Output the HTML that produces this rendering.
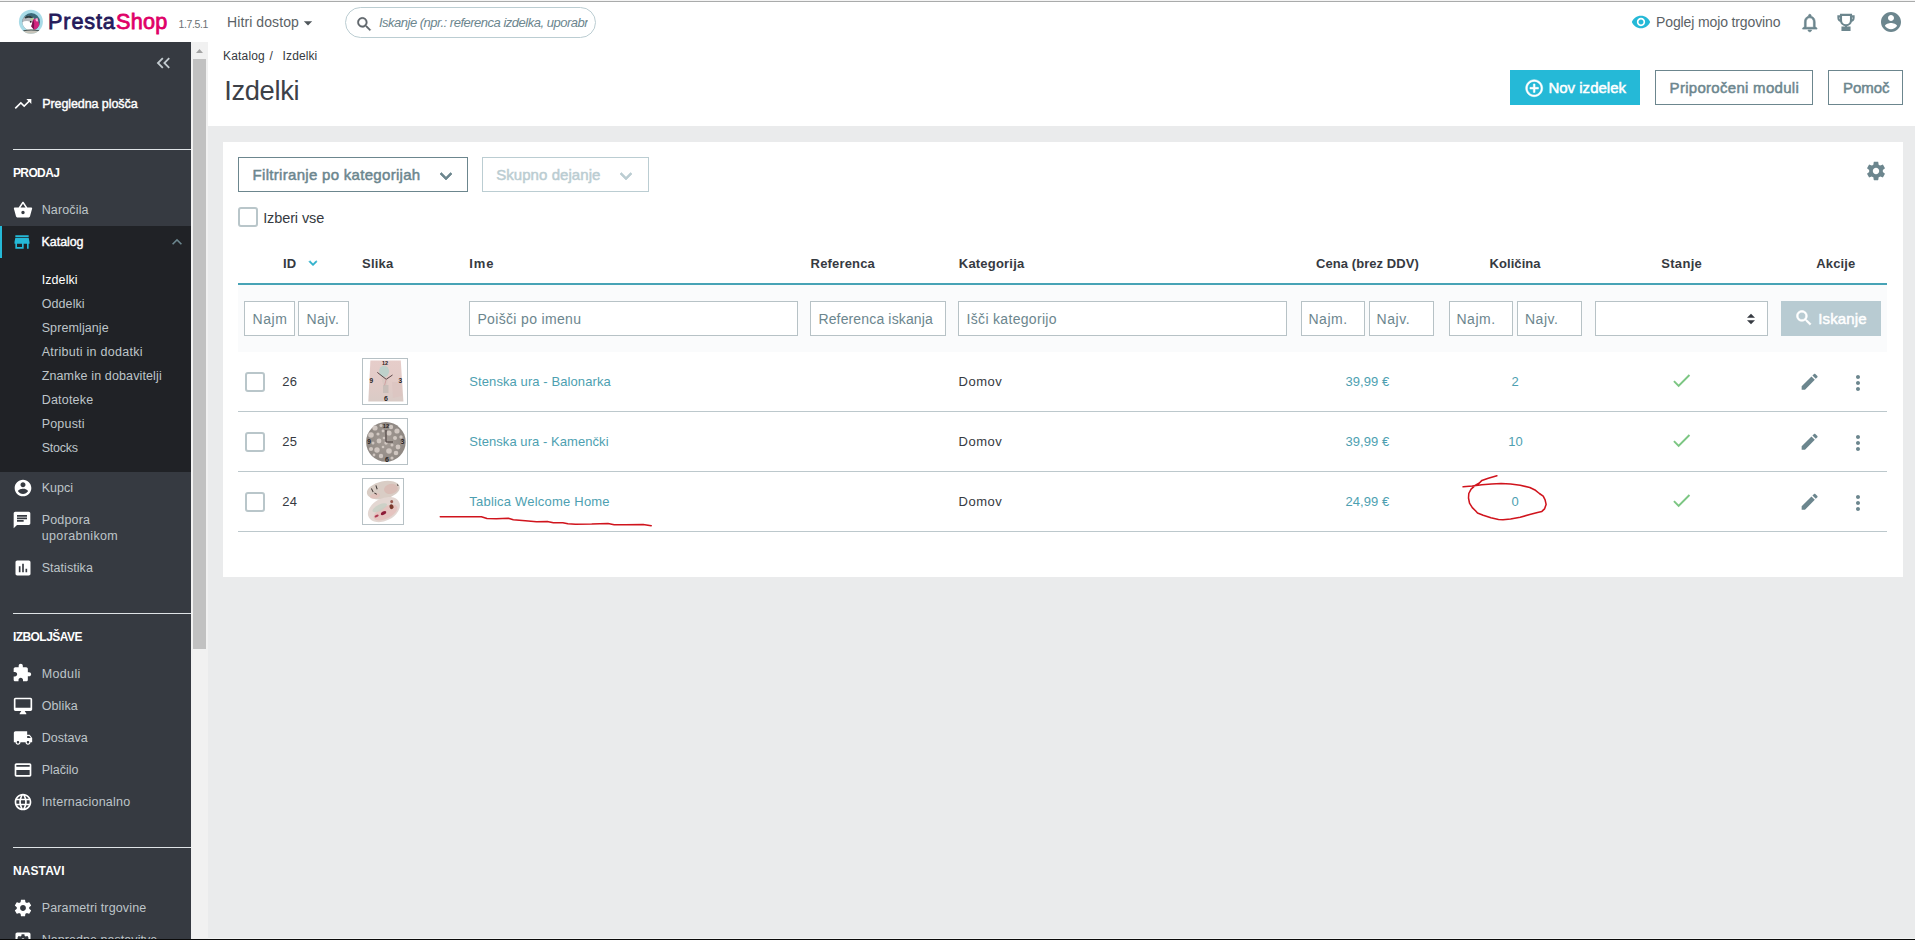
<!DOCTYPE html>
<html lang="sl">
<head>
<meta charset="utf-8">
<title>Izdelki • PrestaShop</title>
<style>
*{box-sizing:border-box;margin:0;padding:0}
html,body{width:1915px;height:940px;overflow:hidden;background:#eaebec;font-family:"Liberation Sans","DejaVu Sans",sans-serif;color:#363a41;font-size:13px}
.b,.t,.sv,.inp{position:absolute}
.t{white-space:pre;line-height:1}
.sv{overflow:visible}
.inp{height:35px;border:1px solid #b7c2c6;background:#fff;color:#6c868e;font-size:15px;line-height:33px;padding-left:8px;white-space:nowrap;overflow:hidden}
.cb{position:absolute;width:20px;height:20px;border:2px solid #b9c6ca;border-radius:3px;background:#fff}
.rl{position:absolute;left:238px;width:1649px;height:1px;background:#bcc8cc}
.hr{position:absolute;left:13px;width:178px;height:1px;background:#dfe3e6}
.th{position:absolute;border:1px solid #b7c1c5;background:#fff}
</style>
</head>
<body>

<!-- top bar -->
<div class="b" style="left:0px;top:0px;width:1915px;height:42px;background:#fff"></div>
<div class="b" style="left:0px;top:0px;width:1915px;height:1px;background:#f4f4f4"></div>
<div class="b" style="left:0px;top:1px;width:1915px;height:1px;background:#a9abab"></div>
<div class="b" style="left:208px;top:42px;width:1707px;height:84px;background:#fff"></div>
<svg class="sv" style="left:18px;top:9px" width="26" height="26" viewBox="0 0 26 26">
<defs><clipPath id="lc"><circle cx="13.2" cy="12.900" r="8.800"/></clipPath><clipPath id="lo"><circle cx="12.900" cy="12.800" r="12"/></clipPath></defs>
<circle cx="12.900" cy="12.800" r="12" fill="#a8dbe7"/>
<circle cx="13.2" cy="12.900" r="8.800" fill="#3c6b7a"/>
<g clip-path="url(#lc)">
<ellipse cx="10.500" cy="14" rx="7.500" ry="7.200" fill="#b4b7bb"/>
<ellipse cx="9" cy="17.500" rx="7.500" ry="5.500" fill="#ffffff"/>
<path d="M6.500 8.300 Q10.500 5.600 15 8 L14.200 9.400 Q10.500 7.800 7.400 9.600z" fill="#2d3b3f"/>
<path d="M15.200 10.600 L19.300 9 L21.800 17.500 L16.500 21.500 L13.300 17.500z" fill="#d3257e"/>
<path d="M15.200 10.600 L13.300 17.500 L16 20.500 L16.200 14z" fill="#7b1450"/>
<path d="M17.300 9.800 L19.400 9 L20.300 12.600 L18 12.200z" fill="#f3b6d6"/>
<circle cx="14" cy="10.200" r="1.100" fill="#b5d98a"/>
<circle cx="12.700" cy="12.800" r="0.900" fill="#1d1d1d"/>
</g>
<g clip-path="url(#lo)">
<path d="M5.600 21.200 Q13 19.600 21 21.200 L21 26 L5.600 26z" fill="#c7c4ba"/>
<path d="M5.300 21.300 Q13 19.500 21.300 21.300 L21.100 22.300 Q13 20.700 5.500 22.300z" fill="#465558"/>
</g>
</svg>
<svg class="sv" style="left:297.9px;top:12.6px" width="20" height="20" viewBox="0 0 24 24" ><path fill="#4f565b" d="M7 10l5 5 5-5z"/></svg>
<div class="b" style="left:345px;top:7px;width:251px;height:31px;border:1px solid #bbcdd2;border-radius:16px;background:#fff"></div>
<div class="b" style="left:376px;top:8px;width:212px;height:29px;overflow:hidden"><div class="t" style="left:2.9px;top:8.0px;font-size:13px;color:#6c868e;letter-spacing:-0.49px;font-style:italic;">Iskanje (npr.: referenca izdelka, uporabnik, naročilo)</div></div>
<svg class="sv" style="left:355.0px;top:14.6px" width="18.6" height="18.6" viewBox="0 0 24 24" stroke="#5f666b" stroke-width="0.4"><path fill="#5f666b" d="M15.5 14h-.79l-.28-.27C15.410 12.590 16 11.110 16 9.500 16 5.910 13.090 3 9.500 3S3 5.910 3 9.500 5.910 16 9.500 16c1.610 0 3.090-.59 4.230-1.570l.27.28v.79l5 4.990L20.490 19l-4.990-5zm-6 0C7.010 14 5 11.990 5 9.500S7.010 5 9.500 5 14 7.010 14 9.500 11.990 14 9.500 14z"/></svg>
<svg class="sv" style="left:1631.0px;top:12.2px" width="20" height="20" viewBox="0 0 24 24" ><path fill="#25b9d7" d="M12 4.500C7 4.500 2.730 7.610 1 12c1.730 4.390 6 7.500 11 7.500s9.270-3.110 11-7.500c-1.730-4.390-6-7.500-11-7.500zM12 17c-2.760 0-5-2.240-5-5s2.240-5 5-5 5 2.240 5 5-2.240 5-5 5zm0-8c-1.660 0-3 1.340-3 3s1.340 3 3 3 3-1.340 3-3-1.340-3-3-3z"/></svg>
<svg class="sv" style="left:1799.2px;top:11.5px" width="21.6" height="21.6" viewBox="0 0 24 24" stroke="#6c868e" stroke-width="0.7"><path fill="#6c868e" d="M12 22c1.100 0 2-.9 2-2h-4c0 1.100.9 2 2 2zm6-6v-5c0-3.070-1.630-5.640-4.500-6.320V4c0-.83-.67-1.500-1.500-1.500s-1.500.67-1.500 1.500v.68C7.640 5.360 6 7.920 6 11v5l-2 2v1h16v-1l-2-2zm-2 1H8v-6c0-2.480 1.510-4.500 4-4.500s4 2.020 4 4.500v6z"/></svg>
<svg class="sv" style="left:1836px;top:12px" width="20" height="20" viewBox="0 0 20 20" fill="none" stroke="#6c868e" stroke-width="2.100">
<path d="M5 2.900h10v5.300a5 5 0 0 1-10 0z"/>
<path d="M5 4.400H2.400v1.400a3 3 0 0 0 3.300 3.200M15 4.400h2.600v1.400a3 3 0 0 1-3.300 3.200"/>
<path d="M10 13v2.400M6.500 15.600h7v2.300h-7z"/>
</svg>
<svg class="sv" style="left:1879.0px;top:9.7px" width="24" height="24" viewBox="0 0 24 24" ><path fill="#6c868e" d="M12 2C6.48 2 2 6.48 2 12s4.48 10 10 10 10-4.48 10-10S17.52 2 12 2zm0 3c1.66 0 3 1.34 3 3s-1.34 3-3 3-3-1.34-3-3 1.34-3 3-3zm0 14.2c-2.5 0-4.71-1.28-6-3.220.03-1.990 4-3.080 6-3.080 1.990 0 5.970 1.090 6 3.080-1.290 1.940-3.500 3.220-6 3.220z"/></svg>
<div class="t" style="left:48.1px;top:11.0px;font-size:21.6px;color:#251b5b;letter-spacing:0.86px;-webkit-text-stroke:0.8px #251b5b;">Presta</div>
<div class="t" style="left:116.1px;top:11.0px;font-size:21.6px;color:#df0067;letter-spacing:0.22px;-webkit-text-stroke:0.8px #df0067;">Shop</div>
<div class="t" style="left:178.6px;top:19.0px;font-size:10.5px;color:#6a7175;letter-spacing:-0.38px;">1.7.5.1</div>
<div class="t" style="left:227.1px;top:15.0px;font-size:14px;color:#5b6266;letter-spacing:0.08px;">Hitri dostop</div>
<div class="t" style="left:1656.1px;top:15.0px;font-size:14px;color:#5b6266;letter-spacing:-0.13px;">Poglej mojo trgovino</div>
<!-- header -->
<div class="b" style="left:1510px;top:70px;width:130px;height:34.5px;background:#25b9d7"></div>
<div class="b" style="left:1655px;top:70px;width:158px;height:34.5px;border:1px solid #6c868e;background:#fff"></div>
<div class="b" style="left:1828px;top:70px;width:75px;height:34.5px;border:1px solid #6c868e;background:#fff"></div>
<svg class="sv" style="left:1524.3px;top:77.8px" width="20.4" height="20.4" viewBox="0 0 24 24" stroke="#ffffff" stroke-width="0.6"><path fill="#ffffff" d="M13 7h-2v4H7v2h4v4h2v-4h4v-2h-4V7zm-1-5C6.48 2 2 6.48 2 12s4.48 10 10 10 10-4.48 10-10S17.52 2 12 2zm0 18c-4.410 0-8-3.590-8-8s3.590-8 8-8 8 3.590 8 8-3.590 8-8 8z"/></svg>
<div class="t" style="left:223.1px;top:50.0px;font-size:12px;color:#363a41;letter-spacing:0.16px;">Katalog</div>
<div class="t" style="left:269.6px;top:50.0px;font-size:12px;color:#363a41;letter-spacing:1.96px;">/</div>
<div class="t" style="left:282.6px;top:50.0px;font-size:12px;color:#363a41;letter-spacing:0.11px;">Izdelki</div>
<div class="t" style="left:224.2px;top:77.0px;font-size:27.3px;color:#3d4148;letter-spacing:-0.33px;">Izdelki</div>
<div class="t" style="left:1548.4px;top:80.0px;font-size:15px;-webkit-text-stroke:0.49px #ffffff;color:#ffffff;letter-spacing:0.01px;">Nov izdelek</div>
<div class="t" style="left:1669.6px;top:80.0px;font-size:15px;-webkit-text-stroke:0.49px #6c868e;color:#6c868e;letter-spacing:0.29px;">Priporočeni moduli</div>
<div class="t" style="left:1843.1px;top:80.0px;font-size:15px;-webkit-text-stroke:0.49px #6c868e;color:#6c868e;letter-spacing:-0.08px;">Pomoč</div>
<!-- sidebar -->
<div class="b" style="left:0px;top:42px;width:191px;height:898px;background:#363a41"></div>
<div class="b" style="left:0px;top:226px;width:191px;height:246px;background:#202226"></div>
<div class="b" style="left:0px;top:226px;width:2px;height:32px;background:#25b9d7"></div>
<div class="b" style="left:191px;top:42px;width:17px;height:898px;background:#f1f1f1"></div>
<div class="b" style="left:193px;top:59px;width:13px;height:590px;background:#c1c1c1"></div>
<svg class="sv" style="left:191px;top:42px" width="17" height="17" viewBox="0 0 17 17"><path d="M5 11L8.500 7 12 11z" fill="#a3a3a3"/></svg>
<svg class="sv" style="left:152.5px;top:52.3px" width="22" height="22" viewBox="0 0 24 24" ><path fill="#c3cbd0" d="M11.410 7.410L10 6l-6 6 6 6 1.410-1.410L6.830 12zM18.410 7.410L17 6l-6 6 6 6 1.410-1.410L13.830 12z"/></svg>
<div class="hr" style="top:149px"></div>
<div class="hr" style="top:613px"></div>
<div class="hr" style="top:847px"></div>
<svg class="sv" style="left:12.8px;top:94.0px" width="20" height="20" viewBox="0 0 24 24" ><path fill="#ffffff" d="M16 6l2.29 2.29-4.88 4.88-4-4L2 16.59 3.41 18l6-6 4 4 6.3-6.29L22 12V6z"/></svg>
<svg class="sv" style="left:12.5px;top:199.5px" width="20" height="20" viewBox="0 0 24 24" ><path fill="#ffffff" d="M17.21 9l-4.38-6.56c-.19-.28-.51-.42-.83-.42-.32 0-.64.14-.83.43L6.79 9H2c-.55 0-1 .45-1 1 0 .09.01.18.04.27l2.54 9.27c.23.84 1 1.46 1.92 1.46h13c.92 0 1.69-.62 1.93-1.46l2.54-9.27L23 10c0-.55-.45-1-1-1h-4.790zM9 9l3-4.4L15 9H9zm3 8c-1.100 0-2-.9-2-2s.9-2 2-2 2 .9 2 2-.9 2-2 2z"/></svg>
<svg class="sv" style="left:12.0px;top:231.5px" width="20" height="20" viewBox="0 0 24 24" ><path fill="#25b9d7" d="M20 4H4v2h16V4zm1 10v-2l-1-5H4l-1 5v2h1v6h10v-6h4v6h2v-6h1zm-9 4H6v-4h6v4z"/></svg>
<svg class="sv" style="left:166.8px;top:231.5px" width="20" height="20" viewBox="0 0 24 24" ><path fill="#6c868e" d="M7.41 15.41L12 10.83l4.59 4.58L18 14l-6-6-6 6z"/></svg>
<svg class="sv" style="left:12.5px;top:478.0px" width="20" height="20" viewBox="0 0 24 24" ><path fill="#ffffff" d="M12 2C6.48 2 2 6.48 2 12s4.48 10 10 10 10-4.48 10-10S17.52 2 12 2zm0 3c1.66 0 3 1.34 3 3s-1.34 3-3 3-3-1.34-3-3 1.34-3 3-3zm0 14.2c-2.5 0-4.71-1.28-6-3.220.03-1.990 4-3.080 6-3.080 1.990 0 5.970 1.090 6 3.080-1.290 1.940-3.500 3.220-6 3.220z"/></svg>
<svg class="sv" style="left:12.0px;top:510.0px" width="20" height="20" viewBox="0 0 24 24" ><path fill="#ffffff" d="M20 2H4c-1.100 0-1.990.9-1.990 2L2 22l4-4h14c1.100 0 2-.9 2-2V4c0-1.100-.9-2-2-2zM6 9h12v2H6V9zm8 5H6v-2h8v2zm4-6H6V6h12v2z"/></svg>
<svg class="sv" style="left:12.5px;top:557.5px" width="20" height="20" viewBox="0 0 24 24" ><path fill="#ffffff" d="M19 3H5c-1.100 0-2 .9-2 2v14c0 1.100.9 2 2 2h14c1.100 0 2-.9 2-2V5c0-1.100-.9-2-2-2zM9 17H7v-7h2v7zm4 0h-2V7h2v10zm4 0h-2v-4h2v4z"/></svg>
<svg class="sv" style="left:12.0px;top:663.0px" width="20" height="20" viewBox="0 0 24 24" ><path fill="#ffffff" d="M20.5 11H19V7c0-1.100-.9-2-2-2h-4V3.500C13 2.120 11.880 1 10.500 1S8 2.120 8 3.500V5H4c-1.100 0-1.990.9-1.990 2v3.800H3.500c1.490 0 2.700 1.210 2.700 2.700s-1.210 2.700-2.700 2.700H2V20c0 1.100.9 2 2 2h3.800v-1.500c0-1.490 1.210-2.700 2.700-2.700 1.490 0 2.700 1.210 2.700 2.700V22H17c1.100 0 2-.9 2-2v-4h1.500c1.380 0 2.500-1.120 2.500-2.500S21.880 11 20.500 11z"/></svg>
<svg class="sv" style="left:12.5px;top:696.0px" width="20" height="20" viewBox="0 0 24 24" ><path fill="#ffffff" d="M21 2H3c-1.100 0-2 .9-2 2v12c0 1.100.9 2 2 2h7l-2 3v1h8v-1l-2-3h7c1.100 0 2-.9 2-2V4c0-1.100-.9-2-2-2zm0 12H3V4h18v10z"/></svg>
<svg class="sv" style="left:12.5px;top:727.8px" width="20" height="20" viewBox="0 0 24 24" ><path fill="#ffffff" d="M20 8h-3V4H3c-1.100 0-2 .9-2 2v11h2c0 1.660 1.340 3 3 3s3-1.340 3-3h6c0 1.660 1.340 3 3 3s3-1.340 3-3h2v-5l-3-4zM6 18.500c-.83 0-1.500-.67-1.500-1.500s.67-1.500 1.500-1.500 1.500.67 1.500 1.500-.67 1.500-1.500 1.500zm13.500-9l1.960 2.500H17V9.500h2.500zm-1.500 9c-.83 0-1.500-.67-1.500-1.500s.67-1.500 1.500-1.500 1.500.67 1.500 1.500-.67 1.500-1.500 1.500z"/></svg>
<svg class="sv" style="left:12.5px;top:759.6px" width="20" height="20" viewBox="0 0 24 24" ><path fill="#ffffff" d="M20 4H4c-1.110 0-1.990.89-1.990 2L2 18c0 1.110.89 2 2 2h16c1.110 0 2-.89 2-2V6c0-1.110-.89-2-2-2zm0 14H4v-6h16v6zm0-10H4V6h16v2z"/></svg>
<svg class="sv" style="left:12.5px;top:791.7px" width="20" height="20" viewBox="0 0 24 24" ><path fill="#ffffff" d="M11.99 2C6.47 2 2 6.48 2 12s4.47 10 9.99 10C17.52 22 22 17.52 22 12S17.52 2 11.99 2zm6.93 6h-2.950c-.32-1.250-.78-2.450-1.380-3.560 1.840.63 3.370 1.910 4.330 3.560zM12 4.040c.83 1.200 1.480 2.530 1.910 3.960h-3.820c.43-1.430 1.080-2.760 1.910-3.960zM4.260 14C4.100 13.360 4 12.690 4 12s.1-1.360.26-2h3.380c-.08.66-.14 1.320-.14 2 0 .68.06 1.340.14 2H4.260zm.82 2h2.950c.32 1.250.78 2.450 1.380 3.560-1.840-.63-3.370-1.900-4.330-3.560zm2.950-8H5.080c.96-1.660 2.490-2.930 4.330-3.560C8.810 5.550 8.350 6.750 8.030 8zM12 19.960c-.83-1.200-1.480-2.530-1.910-3.960h3.820c-.43 1.430-1.080 2.760-1.910 3.960zM14.340 14H9.660c-.09-.66-.16-1.320-.16-2 0-.68.07-1.350.16-2h4.680c.09.65.16 1.320.16 2 0 .68-.07 1.340-.16 2zm.25 5.560c.6-1.110 1.060-2.310 1.380-3.560h2.950c-.96 1.650-2.490 2.930-4.330 3.560zM16.360 14c.08-.66.14-1.320.14-2 0-.68-.06-1.340-.14-2h3.380c.16.64.26 1.310.26 2s-.1 1.360-.26 2h-3.380z"/></svg>
<svg class="sv" style="left:12.5px;top:898.0px" width="20" height="20" viewBox="0 0 24 24" ><path fill="#ffffff" d="M19.43 12.98c.04-.32.07-.64.07-.98s-.03-.66-.07-.98l2.110-1.650c.19-.15.24-.42.12-.64l-2-3.460c-.12-.22-.39-.3-.61-.22l-2.490 1c-.52-.4-1.080-.73-1.690-.98l-.38-2.650C14.460 2.180 14.250 2 14 2h-4c-.25 0-.46.18-.49.42l-.38 2.650c-.61.25-1.170.59-1.690.98l-2.490-1c-.23-.09-.49 0-.61.22l-2 3.460c-.13.22-.07.49.12.64l2.110 1.650c-.04.32-.07.65-.07.98s.03.66.07.98l-2.110 1.650c-.19.15-.24.42-.12.64l2 3.460c.12.22.39.3.61.22l2.490-1c.52.4 1.080.73 1.690.98l.38 2.650c.03.24.24.42.49.42h4c.25 0 .46-.18.49-.42l.38-2.650c.61-.25 1.170-.59 1.690-.98l2.490 1c.23.09.49 0 .61-.22l2-3.460c.12-.22.07-.49-.12-.64l-2.110-1.650zM12 15.500c-1.930 0-3.500-1.570-3.500-3.500s1.570-3.500 3.500-3.500 3.500 1.570 3.500 3.500-1.570 3.500-3.500 3.500z"/></svg>
<svg class="sv" style="left:12.5px;top:929.5px" width="20" height="20" viewBox="0 0 24 24" ><path fill="#ffffff" d="M12 10c-1.100 0-2 .9-2 2s.9 2 2 2 2-.9 2-2-.9-2-2-2zm7-7H5c-1.110 0-2 .9-2 2v14c0 1.100.89 2 2 2h14c1.110 0 2-.9 2-2V5c0-1.100-.89-2-2-2zm-1.750 9c0 .23-.02.46-.05.68l1.480 1.160c.13.11.17.30.08.45l-1.400 2.420c-.09.15-.27.21-.43.15l-1.740-.7c-.36.28-.76.51-1.180.69l-.26 1.850c-.03.17-.18.30-.35.30h-2.800c-.17 0-.32-.13-.35-.29l-.26-1.850c-.43-.18-.82-.41-1.180-.69l-1.740.7c-.16.06-.34 0-.43-.15l-1.400-2.420c-.09-.15-.05-.34.08-.45l1.480-1.160c-.03-.23-.05-.46-.05-.69 0-.23.02-.46.05-.68l-1.480-1.160c-.13-.11-.17-.30-.08-.45l1.400-2.420c.09-.15.27-.21.43-.15l1.740.7c.36-.28.76-.51 1.180-.69l.26-1.850c.03-.17.18-.30.35-.30h2.800c.17 0 .32.13.35.29l.26 1.850c.43.18.82.41 1.180.69l1.740-.7c.16-.06.34 0 .43.15l1.400 2.420c.09.15.05.34-.08.45l-1.480 1.160c.03.23.05.46.05.69z"/></svg>
<div class="t" style="left:42.2px;top:98.0px;font-size:12.5px;-webkit-text-stroke:0.41px #ffffff;color:#ffffff;letter-spacing:-0.08px;">Pregledna plošča</div>
<div class="t" style="left:12.9px;top:167.0px;font-size:12px;font-weight:bold;color:#ffffff;letter-spacing:-0.59px;">PRODAJ</div>
<div class="t" style="left:41.7px;top:204.0px;font-size:12.5px;color:#bec5c9;letter-spacing:0.14px;">Naročila</div>
<div class="t" style="left:41.6px;top:236.0px;font-size:12.5px;-webkit-text-stroke:0.41px #ffffff;color:#ffffff;letter-spacing:-0.07px;">Katalog</div>
<div class="t" style="left:41.7px;top:274.0px;font-size:12.5px;color:#fffffe;letter-spacing:0.08px;">Izdelki</div>
<div class="t" style="left:41.7px;top:298.0px;font-size:12.5px;color:#bec5c9;letter-spacing:0.09px;">Oddelki</div>
<div class="t" style="left:41.7px;top:322.0px;font-size:12.5px;color:#bec5c9;letter-spacing:0.10px;">Spremljanje</div>
<div class="t" style="left:41.7px;top:346.0px;font-size:12.5px;color:#bec5c9;letter-spacing:0.27px;">Atributi in dodatki</div>
<div class="t" style="left:41.7px;top:370.0px;font-size:12.5px;color:#bec5c9;letter-spacing:0.13px;">Znamke in dobavitelji</div>
<div class="t" style="left:41.7px;top:394.0px;font-size:12.5px;color:#bec5c9;letter-spacing:0.21px;">Datoteke</div>
<div class="t" style="left:41.7px;top:418.0px;font-size:12.5px;color:#bec5c9;letter-spacing:0.19px;">Popusti</div>
<div class="t" style="left:41.7px;top:442.0px;font-size:12.5px;color:#bec5c9;letter-spacing:-0.25px;">Stocks</div>
<div class="t" style="left:41.7px;top:482.0px;font-size:12.5px;color:#bec5c9;letter-spacing:0.00px;">Kupci</div>
<div class="t" style="left:41.7px;top:514.0px;font-size:12.5px;color:#bec5c9;letter-spacing:0.16px;">Podpora</div>
<div class="t" style="left:41.7px;top:530.0px;font-size:12.5px;color:#bec5c9;letter-spacing:0.38px;">uporabnikom</div>
<div class="t" style="left:41.7px;top:562.0px;font-size:12.5px;color:#bec5c9;letter-spacing:0.05px;">Statistika</div>
<div class="t" style="left:12.9px;top:631.0px;font-size:12px;font-weight:bold;color:#ffffff;letter-spacing:-0.55px;">IZBOLJŠAVE</div>
<div class="t" style="left:41.7px;top:668.0px;font-size:12.5px;color:#bec5c9;letter-spacing:0.36px;">Moduli</div>
<div class="t" style="left:41.7px;top:700.0px;font-size:12.5px;color:#bec5c9;letter-spacing:0.13px;">Oblika</div>
<div class="t" style="left:41.7px;top:732.0px;font-size:12.5px;color:#bec5c9;letter-spacing:0.01px;">Dostava</div>
<div class="t" style="left:41.7px;top:764.0px;font-size:12.5px;color:#bec5c9;letter-spacing:-0.02px;">Plačilo</div>
<div class="t" style="left:41.7px;top:796.0px;font-size:12.5px;color:#bec5c9;letter-spacing:0.21px;">Internacionalno</div>
<div class="t" style="left:12.9px;top:865.0px;font-size:12px;font-weight:bold;color:#ffffff;letter-spacing:0.12px;">NASTAVI</div>
<div class="t" style="left:41.7px;top:902.0px;font-size:12.5px;color:#bec5c9;letter-spacing:0.14px;">Parametri trgovine</div>
<div class="t" style="left:41.7px;top:934.0px;font-size:12.5px;color:#bec5c9;letter-spacing:0.05px;">Napredne nastavitve</div>
<!-- card -->
<div class="b" style="left:223px;top:142px;width:1680px;height:435px;background:#fff"></div>
<div class="b" style="left:238px;top:157px;width:230px;height:35px;border:1px solid #6c868e;background:#fff"></div>
<div class="b" style="left:482px;top:157px;width:167px;height:35px;border:1px solid #bbcdd2;background:#fff"></div>
<svg class="sv" style="left:433.5px;top:164.3px" width="24" height="24" viewBox="0 0 24 24" stroke="#6c868e" stroke-width="0.7"><path fill="#6c868e" d="M7.41 8.59L12 13.17l4.59-4.58L18 10l-6 6-6-6z"/></svg>
<svg class="sv" style="left:614.2px;top:164.3px" width="24" height="24" viewBox="0 0 24 24" stroke="#bbcdd2" stroke-width="0.7"><path fill="#bbcdd2" d="M7.41 8.59L12 13.17l4.59-4.58L18 10l-6 6-6-6z"/></svg>
<svg class="sv" style="left:1865.0px;top:159.7px" width="22" height="22" viewBox="0 0 24 24" ><path fill="#6c868e" d="M19.43 12.98c.04-.32.07-.64.07-.98s-.03-.66-.07-.98l2.110-1.650c.19-.15.24-.42.12-.64l-2-3.460c-.12-.22-.39-.3-.61-.22l-2.490 1c-.52-.4-1.080-.73-1.690-.98l-.38-2.650C14.460 2.180 14.250 2 14 2h-4c-.25 0-.46.18-.49.42l-.38 2.650c-.61.25-1.170.59-1.690.98l-2.490-1c-.23-.09-.49 0-.61.22l-2 3.460c-.13.22-.07.49.12.64l2.110 1.650c-.04.32-.07.65-.07.98s.03.66.07.98l-2.110 1.650c-.19.15-.24.42-.12.64l2 3.460c.12.22.39.3.61.22l2.490-1c.52.4 1.080.73 1.690.98l.38 2.650c.03.24.24.42.49.42h4c.25 0 .46-.18.49-.42l.38-2.650c.61-.25 1.170-.59 1.690-.98l2.490 1c.23.09.49 0 .61-.22l2-3.460c.12-.22.07-.49-.12-.64l-2.110-1.650zM12 15.500c-1.930 0-3.500-1.570-3.500-3.500s1.570-3.500 3.500-3.500 3.500 1.570 3.500 3.500-1.570 3.500-3.500 3.500z"/></svg>
<div class="cb" style="left:238px;top:207px"></div>
<svg class="sv" style="left:304.6px;top:255.0px" width="16" height="16" viewBox="0 0 24 24" stroke="#2fb0cb" stroke-width="1"><path fill="#2fb0cb" d="M7.41 8.59L12 13.17l4.59-4.58L18 10l-6 6-6-6z"/></svg>
<div class="b" style="left:238px;top:282.6px;width:1649px;height:2.6px;background:#47a3b6"></div>
<div class="b" style="left:238px;top:285px;width:1649px;height:67px;background:#fafbfc"></div>
<div class="inp" style="left:244px;top:301px;width:51px"></div>
<div class="inp" style="left:298px;top:301px;width:51px"></div>
<div class="inp" style="left:469px;top:301px;width:329px"></div>
<div class="inp" style="left:810px;top:301px;width:136px"></div>
<div class="inp" style="left:958px;top:301px;width:329px"></div>
<div class="inp" style="left:1301px;top:301px;width:64px"></div>
<div class="inp" style="left:1369px;top:301px;width:65px"></div>
<div class="inp" style="left:1449px;top:301px;width:64px"></div>
<div class="inp" style="left:1517px;top:301px;width:65px"></div>
<div class="inp" style="left:1595px;top:301px;width:173px"></div>
<div class="t" style="left:306.4px;top:312.0px;font-size:14px;color:#6c868e;letter-spacing:0.39px;">Najv.</div>
<div class="t" style="left:477.4px;top:312.0px;font-size:14px;color:#6c868e;letter-spacing:0.34px;">Poišči po imenu</div>
<div class="t" style="left:818.4px;top:312.0px;font-size:14px;color:#6c868e;letter-spacing:0.15px;">Referenca iskanja</div>
<div class="t" style="left:966.6px;top:312.0px;font-size:14px;color:#6c868e;letter-spacing:0.31px;">Išči kategorijo</div>
<div class="t" style="left:1308.4px;top:312.0px;font-size:14px;color:#6c868e;letter-spacing:0.55px;">Najm.</div>
<div class="t" style="left:1376.6px;top:312.0px;font-size:14px;color:#6c868e;letter-spacing:0.55px;">Najv.</div>
<div class="t" style="left:1456.4px;top:312.0px;font-size:14px;color:#6c868e;letter-spacing:0.55px;">Najm.</div>
<div class="t" style="left:1524.9px;top:312.0px;font-size:14px;color:#6c868e;letter-spacing:0.55px;">Najv.</div>
<div class="b" style="left:246px;top:303px;width:41px;height:31px;overflow:hidden"><div class="t" style="left:6.5px;top:9.0px;font-size:14px;color:#6c868e;letter-spacing:0.55px;">Najm.</div></div>
<svg class="sv" style="left:1746px;top:313px" width="10" height="12" viewBox="0 0 10 12"><path d="M1 4.700L5 0.700 9 4.700zM1 7.300L5 11.300 9 7.300z" fill="#363a41"/></svg>
<div class="b" style="left:1781px;top:301px;width:100px;height:35px;background:#b8cbd2"></div>
<svg class="sv" style="left:1794.2px;top:308.3px" width="20" height="20" viewBox="0 0 24 24" stroke="#ffffff" stroke-width="0.7"><path fill="#ffffff" d="M15.5 14h-.79l-.28-.27C15.410 12.590 16 11.110 16 9.500 16 5.910 13.090 3 9.500 3S3 5.910 3 9.500 5.910 16 9.500 16c1.610 0 3.090-.59 4.230-1.570l.27.28v.79l5 4.990L20.490 19l-4.990-5zm-6 0C7.010 14 5 11.990 5 9.500S7.010 5 9.500 5 14 7.010 14 9.500 11.990 14 9.500 14z"/></svg>
<div class="rl" style="top:411px"></div>
<div class="rl" style="top:471px"></div>
<div class="rl" style="top:531px"></div>
<div class="cb" style="left:245px;top:372px"></div>
<svg class="sv" style="left:1670.3px;top:369.4px" width="23" height="23" viewBox="0 0 24 24" ><path fill="#7cc683" d="M9 16.170L4.830 12l-1.420 1.410L9 19 21 7l-1.410-1.410z"/></svg>
<svg class="sv" style="left:1798.8px;top:370.7px" width="21.3" height="21.3" viewBox="0 0 24 24" ><path fill="#6c868e" d="M3 17.250V21h3.750L17.810 9.940l-3.750-3.750L3 17.250zM20.710 7.040c.39-.39.39-1.020 0-1.410l-2.340-2.340c-.39-.39-1.020-.39-1.410 0l-1.830 1.830 3.750 3.750 1.830-1.830z"/></svg>
<svg class="sv" style="left:1846.0px;top:371.0px" width="24" height="24" viewBox="0 0 24 24" ><path fill="#6c868e" d="M12 8c1.100 0 2-.9 2-2s-.9-2-2-2-2 .9-2 2 .9 2 2 2zm0 2c-1.100 0-2 .9-2 2s.9 2 2 2 2-.9 2-2-.9-2-2-2zm0 6c-1.100 0-2 .9-2 2s.9 2 2 2 2-.9 2-2-.9-2-2-2z"/></svg>
<div class="cb" style="left:245px;top:432px"></div>
<svg class="sv" style="left:1670.3px;top:429.4px" width="23" height="23" viewBox="0 0 24 24" ><path fill="#7cc683" d="M9 16.170L4.830 12l-1.420 1.410L9 19 21 7l-1.410-1.410z"/></svg>
<svg class="sv" style="left:1798.8px;top:430.7px" width="21.3" height="21.3" viewBox="0 0 24 24" ><path fill="#6c868e" d="M3 17.250V21h3.750L17.810 9.940l-3.750-3.750L3 17.250zM20.710 7.040c.39-.39.39-1.020 0-1.410l-2.340-2.340c-.39-.39-1.020-.39-1.410 0l-1.830 1.830 3.750 3.750 1.830-1.830z"/></svg>
<svg class="sv" style="left:1846.0px;top:431.0px" width="24" height="24" viewBox="0 0 24 24" ><path fill="#6c868e" d="M12 8c1.100 0 2-.9 2-2s-.9-2-2-2-2 .9-2 2 .9 2 2 2zm0 2c-1.100 0-2 .9-2 2s.9 2 2 2 2-.9 2-2-.9-2-2-2zm0 6c-1.100 0-2 .9-2 2s.9 2 2 2 2-.9 2-2-.9-2-2-2z"/></svg>
<div class="cb" style="left:245px;top:492px"></div>
<svg class="sv" style="left:1670.3px;top:489.4px" width="23" height="23" viewBox="0 0 24 24" ><path fill="#7cc683" d="M9 16.170L4.830 12l-1.420 1.410L9 19 21 7l-1.410-1.410z"/></svg>
<svg class="sv" style="left:1798.8px;top:490.7px" width="21.3" height="21.3" viewBox="0 0 24 24" ><path fill="#6c868e" d="M3 17.250V21h3.750L17.810 9.940l-3.750-3.750L3 17.250zM20.710 7.040c.39-.39.39-1.020 0-1.410l-2.340-2.340c-.39-.39-1.020-.39-1.410 0l-1.830 1.830 3.750 3.750 1.830-1.830z"/></svg>
<svg class="sv" style="left:1846.0px;top:491.0px" width="24" height="24" viewBox="0 0 24 24" ><path fill="#6c868e" d="M12 8c1.100 0 2-.9 2-2s-.9-2-2-2-2 .9-2 2 .9 2 2 2zm0 2c-1.100 0-2 .9-2 2s.9 2 2 2 2-.9 2-2-.9-2-2-2zm0 6c-1.100 0-2 .9-2 2s.9 2 2 2 2-.9 2-2-.9-2-2-2z"/></svg>
<div class="t" style="left:252.6px;top:167.0px;font-size:15px;-webkit-text-stroke:0.49px #6c868e;color:#6c868e;letter-spacing:0.30px;">Filtriranje po kategorijah</div>
<div class="t" style="left:496.2px;top:167.0px;font-size:15px;-webkit-text-stroke:0.49px #bbcdd2;color:#bbcdd2;letter-spacing:0.06px;">Skupno dejanje</div>
<div class="t" style="left:263.2px;top:211.0px;font-size:14.5px;color:#363a41;letter-spacing:-0.11px;">Izberi vse</div>
<div class="t" style="left:282.9px;top:257.0px;font-size:13px;font-weight:bold;color:#363a41;letter-spacing:0.15px;">ID</div>
<div class="t" style="left:362.1px;top:257.0px;font-size:13px;font-weight:bold;color:#363a41;letter-spacing:0.19px;">Slika</div>
<div class="t" style="left:469.3px;top:257.0px;font-size:13px;font-weight:bold;color:#363a41;letter-spacing:0.83px;">Ime</div>
<div class="t" style="left:810.6px;top:257.0px;font-size:13px;font-weight:bold;color:#363a41;letter-spacing:0.17px;">Referenca</div>
<div class="t" style="left:958.8px;top:257.0px;font-size:13px;font-weight:bold;color:#363a41;letter-spacing:0.20px;">Kategorija</div>
<div class="t" style="left:1316.1px;top:257.0px;font-size:13px;font-weight:bold;color:#363a41;letter-spacing:0.06px;">Cena (brez DDV)</div>
<div class="t" style="left:1489.6px;top:257.0px;font-size:13px;font-weight:bold;color:#363a41;letter-spacing:0.05px;">Količina</div>
<div class="t" style="left:1661.2px;top:257.0px;font-size:13px;font-weight:bold;color:#363a41;letter-spacing:0.33px;">Stanje</div>
<div class="t" style="left:1816.3px;top:257.0px;font-size:13px;font-weight:bold;color:#363a41;letter-spacing:0.13px;">Akcije</div>
<div class="t" style="left:1818.3px;top:311.0px;font-size:15px;-webkit-text-stroke:0.49px #ffffff;color:#ffffff;letter-spacing:0.12px;">Iskanje</div>
<div class="t" style="left:282.2px;top:375.0px;font-size:13px;color:#363a41;letter-spacing:0.32px;">26</div>
<div class="t" style="left:469.3px;top:375.0px;font-size:13px;color:#4d9fb1;letter-spacing:0.09px;">Stenska ura - Balonarka</div>
<div class="t" style="left:958.6px;top:375.0px;font-size:13px;color:#363a41;letter-spacing:0.52px;">Domov</div>
<div class="t" style="left:1345.5px;top:375.0px;font-size:13px;color:#4d9fb1;letter-spacing:0.07px;">39,99 €</div>
<div class="t" style="left:1511.6px;top:375.0px;font-size:13px;color:#4d9fb1;letter-spacing:0.57px;">2</div>
<div class="t" style="left:282.2px;top:435.0px;font-size:13px;color:#363a41;letter-spacing:0.32px;">25</div>
<div class="t" style="left:469.3px;top:435.0px;font-size:13px;color:#4d9fb1;letter-spacing:0.06px;">Stenska ura - Kamenčki</div>
<div class="t" style="left:958.6px;top:435.0px;font-size:13px;color:#363a41;letter-spacing:0.52px;">Domov</div>
<div class="t" style="left:1345.5px;top:435.0px;font-size:13px;color:#4d9fb1;letter-spacing:0.07px;">39,99 €</div>
<div class="t" style="left:1508.2px;top:435.0px;font-size:13px;color:#4d9fb1;letter-spacing:-0.03px;">10</div>
<div class="t" style="left:282.2px;top:495.0px;font-size:13px;color:#363a41;letter-spacing:0.32px;">24</div>
<div class="t" style="left:469.3px;top:495.0px;font-size:13px;color:#4d9fb1;letter-spacing:0.21px;">Tablica Welcome Home</div>
<div class="t" style="left:958.6px;top:495.0px;font-size:13px;color:#363a41;letter-spacing:0.52px;">Domov</div>
<div class="t" style="left:1345.5px;top:495.0px;font-size:13px;color:#4d9fb1;letter-spacing:0.07px;">24,99 €</div>
<div class="t" style="left:1511.6px;top:495.0px;font-size:13px;color:#4d9fb1;letter-spacing:0.57px;">0</div>
<div class="th" style="left:362px;top:358px;width:46px;height:47px"></div>
<svg class="sv" style="left:362px;top:358px" width="46" height="47" viewBox="362 358 46 47">
<defs><linearGradient id="pk" x1="0" y1="0" x2="0" y2="1"><stop offset="0" stop-color="#e6cdca"/><stop offset="0.55" stop-color="#e2cbc7"/><stop offset="1" stop-color="#d9cbc6"/></linearGradient></defs>
<path d="M370.400 360.600L400.800 360.600 403.400 401.400 368.300 401.400z" fill="url(#pk)"/>
<path d="M392 382l9 0 1 14-9 2z" fill="#dcc3c0" opacity=".7"/>
<ellipse cx="384.100" cy="371.300" rx="5" ry="5.800" fill="#b4d2cc" opacity=".8"/>
<path d="M381 376.500l2.300 8.500h3.600l1.600-8z" fill="#d8c6c0" opacity=".8"/>
<rect x="383" y="385" width="5.500" height="8" fill="#c9beb9"/>
<path d="M377.300 372.400L386.200 379.300 392.500 375" fill="none" stroke="#4a3638" stroke-width="0.900"/>
<path d="M386.200 379.300l-1.600 6" fill="none" stroke="#c98f92" stroke-width="0.700"/>
<text x="385" y="365" font-size="5.500" font-family="Liberation Sans,sans-serif" font-weight="bold" text-anchor="middle" fill="#2a2424">12</text>
<text x="371.200" y="383.400" font-size="6.500" font-family="Liberation Sans,sans-serif" font-weight="bold" text-anchor="middle" fill="#2a2424">9</text>
<text x="400.300" y="383.400" font-size="6.500" font-family="Liberation Sans,sans-serif" font-weight="bold" text-anchor="middle" fill="#2a2424">3</text>
<text x="386" y="401.300" font-size="7" font-family="Liberation Sans,sans-serif" font-weight="bold" text-anchor="middle" fill="#2a2424">6</text>
</svg>
<div class="th" style="left:362px;top:418px;width:46px;height:47px"></div>
<svg class="sv" style="left:362px;top:418px" width="46" height="47" viewBox="362 418 46 47"><defs><radialGradient id="gc"><stop offset="0" stop-color="#a59c96"/><stop offset="1" stop-color="#8f8883"/></radialGradient></defs><circle cx="385.900" cy="441.900" r="19.800" fill="url(#gc)"/><circle cx="375" cy="428" r="2.6" fill="#d9d0ca" opacity=".85"/><circle cx="381" cy="425.5" r="1.5" fill="#d9d0ca" opacity=".85"/><circle cx="391" cy="427" r="2.2" fill="#d9d0ca" opacity=".85"/><circle cx="397" cy="431" r="2.6" fill="#d9d0ca" opacity=".85"/><circle cx="371" cy="435" r="2.8" fill="#d9d0ca" opacity=".85"/><circle cx="378" cy="434" r="1.6" fill="#d9d0ca" opacity=".85"/><circle cx="383" cy="431" r="1.4" fill="#d9d0ca" opacity=".85"/><circle cx="389" cy="433" r="2.6" fill="#d9d0ca" opacity=".85"/><circle cx="395" cy="438" r="2" fill="#d9d0ca" opacity=".85"/><circle cx="401" cy="437" r="1.7" fill="#d9d0ca" opacity=".85"/><circle cx="373" cy="443" r="1.5" fill="#d9d0ca" opacity=".85"/><circle cx="379" cy="441" r="2.4" fill="#d9d0ca" opacity=".85"/><circle cx="384" cy="438" r="1.3" fill="#d9d0ca" opacity=".85"/><circle cx="392" cy="445" r="1.5" fill="#d9d0ca" opacity=".85"/><circle cx="398" cy="447" r="2.4" fill="#d9d0ca" opacity=".85"/><circle cx="371" cy="449" r="2.1" fill="#d9d0ca" opacity=".85"/><circle cx="377" cy="450" r="2.7" fill="#d9d0ca" opacity=".85"/><circle cx="383" cy="447" r="1.3" fill="#d9d0ca" opacity=".85"/><circle cx="389" cy="451" r="2.8" fill="#d9d0ca" opacity=".85"/><circle cx="396" cy="453" r="2.3" fill="#d9d0ca" opacity=".85"/><circle cx="381" cy="456" r="2.2" fill="#d9d0ca" opacity=".85"/><circle cx="374" cy="455" r="1.4" fill="#d9d0ca" opacity=".85"/><circle cx="392" cy="458" r="1.6" fill="#d9d0ca" opacity=".85"/><circle cx="386" cy="443" r="1.7" fill="#d9d0ca" opacity=".85"/><circle cx="402" cy="443" r="1.3" fill="#d9d0ca" opacity=".85"/><path d="M386 430V442H393" fill="none" stroke="#3a3030" stroke-width="0.900"/><text x="386" y="428" font-size="5.800" font-family="Liberation Sans,sans-serif" font-weight="bold" text-anchor="middle" fill="#2a2424">12</text><text x="369" y="444.400" font-size="6.500" font-family="Liberation Sans,sans-serif" font-weight="bold" text-anchor="middle" fill="#2a2424">9</text><text x="402.300" y="444.400" font-size="6.800" font-family="Liberation Sans,sans-serif" font-weight="bold" text-anchor="middle" fill="#2a2424">3</text><text x="387" y="461.500" font-size="7" font-family="Liberation Sans,sans-serif" font-weight="bold" text-anchor="middle" fill="#2a2424">6</text></svg>
<div class="th" style="left:362px;top:478px;width:42px;height:47px"></div>
<svg class="sv" style="left:362px;top:478px" width="42" height="47" viewBox="362 478 42 47">
<g transform="rotate(-12 383.300 490.100)"><ellipse cx="383.300" cy="490.100" rx="16.700" ry="8.800" fill="#d9cdc5"/><ellipse cx="391" cy="490.500" rx="7" ry="5" fill="#d8b9b1" opacity=".8"/><ellipse cx="374" cy="494" rx="5" ry="2.500" fill="#e2c0ba" opacity=".8"/>
<path d="M372 486l1 4M377 484l.5 4M374 491l2 2M398 487.500l.8 1.500" stroke="#3c3432" stroke-width="1"/></g>
<g transform="rotate(-27 383.900 509.600)"><ellipse cx="383.900" cy="509.600" rx="17" ry="11.200" fill="#e3d7d2"/><ellipse cx="384" cy="513" rx="13" ry="6" fill="#e6bdb9" opacity=".75"/><ellipse cx="381" cy="506" rx="8" ry="3" fill="#c6cfc4" opacity=".8"/>
<ellipse cx="382" cy="512.500" rx="3" ry="1.600" fill="#8e1c38"/><ellipse cx="374.500" cy="512" rx="2.200" ry="1.200" fill="#b03a52"/><ellipse cx="392" cy="510.500" rx="2" ry="2.400" fill="#7a3a2c"/><ellipse cx="394.500" cy="506" rx="1.500" ry="1.500" fill="#9a5a50"/></g>
</svg>
<svg class="sv" style="left:0;top:0" width="1915" height="940" viewBox="0 0 1915 940" fill="none" stroke="#d0141d" stroke-width="1.550" stroke-linecap="round" stroke-linejoin="round"><polyline points="440.3,516.7 481.4,516.7 487.0,518.4 496.4,518.8 508.3,518.2 513.3,519.7 525.3,520.7 536.5,521.7 547.2,521.4 553.4,522.7 562.8,522.7 567.9,523.8 575.4,524.2 591.7,524.1 608.0,523.5 614.2,524.7 625.5,524.8 643.1,524.4 651.2,525.7"/><polyline points="1496.9,475.7 1488.3,478.2 1481.9,480.4 1479.4,483.0 1475.5,485.2 1471.1,489.1 1468.8,493.5 1468.5,498.0 1469.5,503.1 1472.3,507.6 1475.5,510.8 1477.5,513.0 1483.2,515.2 1490.9,517.8 1498.5,519.4 1503.0,519.8 1510.6,519.1 1520.2,517.2 1529.8,514.6 1537.5,512.4 1541.9,511.4 1544.5,508.9 1546.1,504.4 1545.1,499.9 1543.2,496.1 1539.4,493.5 1535.5,490.3 1529.8,487.5 1520.2,485.2 1510.6,484.0 1501.1,483.6 1491.5,484.0 1481.9,484.7 1472.3,485.9 1463.1,486.8"/></svg>
<div class="b" style="left:208px;top:938px;width:1707px;height:1px;background:#f3f4f4"></div>
<div class="b" style="left:0px;top:938.6px;width:1915px;height:1.4px;background:#0a0a0a"></div>

</body>
</html>
